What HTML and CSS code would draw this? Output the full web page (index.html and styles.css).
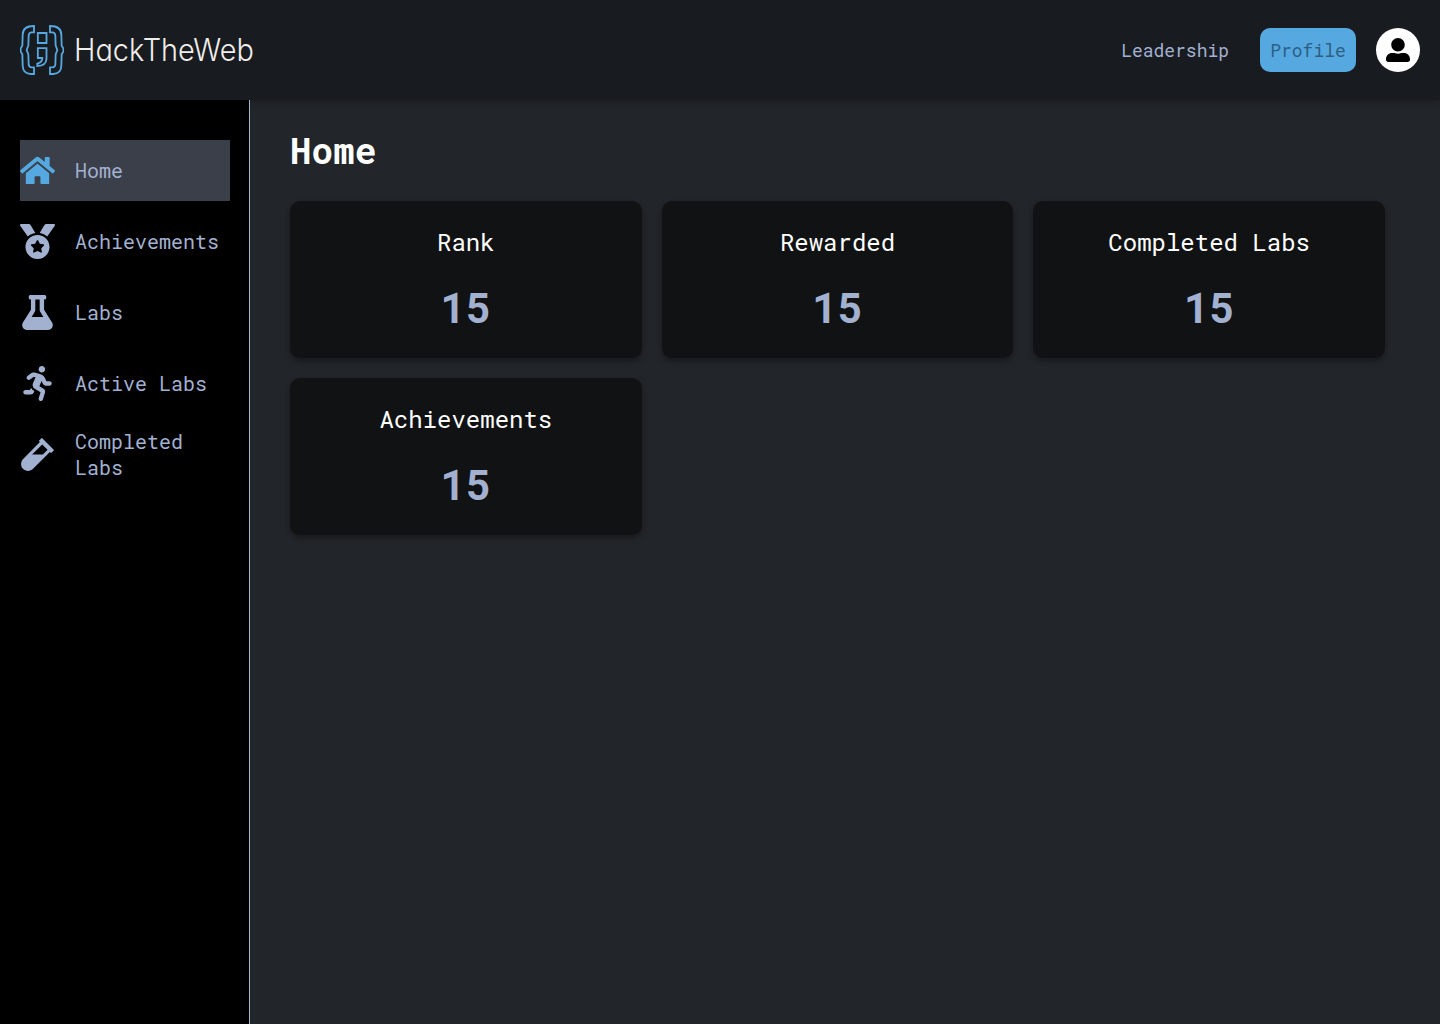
FILE: index.html
```html
<!DOCTYPE html>
<html lang="en">
<head>
<meta charset="utf-8">
<title>HackTheWeb</title>
<link rel="stylesheet" href="styles.css">
</head>
<body>
<header class="topbar">
  <a class="brand">
    <svg class="brand-mark" viewBox="0 0 132 150" fill="none" stroke="#55a9e0" stroke-width="5.5">
      <path d="M42 3V22H35Q27 22 26 31L25 62L20 75L25 88L26 119Q27 127 35 127H42V147H32Q8 146 8 121L7 88L2 80V70L7 62L8 29Q8 3 42 3Z"/>
      <path d="M90 3V22H97Q105 22 106 31L107 62L112 75L107 88L106 119Q105 127 97 127H90V147H100Q124 146 124 121L125 88L130 80V70L125 62L124 29Q124 3 90 3Z"/>
      <path d="M53.5 24H79.5V54H53.5ZM53.5 69.5H79.5V102Q78 123 52 123V116Q67 112 67 99H53.5Z"/>
    </svg>
    <svg class="brand-name" viewBox="0 0 182 50"><text x="-1" y="36" textLength="180" lengthAdjust="spacingAndGlyphs">HackTheWeb</text></svg>
  </a>
  <nav class="topnav">
    <a class="toplink">Leadership</a>
    <a class="profile">Profile</a>
    <span class="avatar"><svg viewBox="0 0 512 512"><path d="M256 288c79.5 0 144-64.5 144-144S335.5 0 256 0 112 64.5 112 144s64.5 144 144 144zm128 32h-55.1c-22.2 10.2-46.9 16-72.9 16s-50.6-5.8-72.9-16H128C57.3 320 0 377.3 0 448v16c0 26.5 21.5 48 48 48h416c26.5 0 48-21.5 48-48v-16c0-70.7-57.3-128-128-128z"/></svg></span>
  </nav>
</header>
<div class="layout">
  <aside class="sidebar">
    <a class="item active"><svg viewBox="0 0 576 512"><path d="M280.37 148.26L96 300.11V464a16 16 0 0 0 16 16l112.06-.29a16 16 0 0 0 15.92-16V368a16 16 0 0 1 16-16h64a16 16 0 0 1 16 16v95.64a16 16 0 0 0 16 16.05L464 480a16 16 0 0 0 16-16V300L295.67 148.26a12.19 12.19 0 0 0-15.3 0zM571.6 251.47L488 182.56V44.05a12 12 0 0 0-12-12h-56a12 12 0 0 0-12 12v72.61L318.47 43a48 48 0 0 0-61 0L4.34 251.47a12 12 0 0 0-1.6 16.9l25.5 31A12 12 0 0 0 45.15 301l235.22-193.74a12.19 12.19 0 0 1 15.3 0L530.9 301a12 12 0 0 0 16.9-1.6l25.5-31a12 12 0 0 0-1.7-16.93z"/></svg><span>Home</span></a>
    <a class="item"><svg viewBox="0 0 512 512"><path d="M223.75 130.75L154.62 15.54A31.997 31.997 0 0 0 127.18 0H16.03C3.08 0-4.5 14.57 2.92 25.18l111.27 158.96c29.72-27.77 67.52-46.83 109.56-53.39zM495.97 0H384.82c-11.24 0-21.66 5.9-27.44 15.54l-69.13 115.21c42.04 6.56 79.84 25.62 109.56 53.38L509.08 25.18C516.5 14.57 508.92 0 495.97 0zM256 160c-97.2 0-176 78.8-176 176s78.8 176 176 176 176-78.8 176-176-78.8-176-176-176zm92.52 157.26l-37.93 36.96 8.97 52.22c1.6 9.36-8.26 16.51-16.65 12.09L256 393.88l-46.9 24.65c-8.4 4.45-18.25-2.74-16.65-12.09l8.97-52.22-37.93-36.96c-6.82-6.64-3.05-18.23 6.35-19.59l52.43-7.64 23.43-47.52c2.11-4.28 6.19-6.39 10.28-6.39 4.11 0 8.22 2.14 10.33 6.39l23.43 47.52 52.43 7.64c9.4 1.36 13.17 12.95 6.35 19.59z"/></svg><span>Achievements</span></a>
    <a class="item"><svg viewBox="0 0 448 512"><path d="M437.2 403.5L320 215V64h8c13.3 0 24-10.7 24-24V24c0-13.3-10.7-24-24-24H120c-13.3 0-24 10.7-24 24v16c0 13.3 10.7 24 24 24h8v151L10.8 403.5C-18.5 450.6 15.3 512 70.9 512h306.2c55.7 0 89.4-61.5 60.1-108.5zM137.9 320l48.2-77.6c3.7-5.2 5.8-11.6 5.8-18.4V64h64v160c0 6.9 2.2 13.2 5.8 18.4l48.2 77.6h-172z"/></svg><span>Labs</span></a>
    <a class="item"><svg viewBox="0 0 416 512"><path d="M272 96c26.51 0 48-21.49 48-48S298.51 0 272 0s-48 21.49-48 48 21.49 48 48 48zM113.69 317.47l-14.8 34.52H32c-17.67 0-32 14.33-32 32s14.33 32 32 32h77.45c19.25 0 36.58-11.44 44.11-29.09l8.79-20.52-10.67-6.3c-17.32-10.23-30.06-25.37-37.99-42.61zM384 223.99h-44.03l-26.06-53.25c-12.5-25.55-35.45-44.23-61.78-50.94l-71.08-21.14c-28.3-6.8-57.77-.55-80.84 17.14l-39.67 30.41c-14.03 10.75-16.69 30.83-5.94 44.86s30.84 16.69 44.86 5.94l39.66-30.41c7.67-5.89 17.44-8 25.27-6.14l14.7 4.37-37.46 87.39c-12.62 29.48-1.31 64.01 26.3 80.31l84.98 50.17-27.47 87.73c-5.28 16.86 4.11 34.82 20.97 40.09 3.19 1 6.41 1.48 9.58 1.48 13.61 0 26.23-8.77 30.52-22.45l31.64-101.06c5.91-20.77-2.89-43.08-21.64-54.39l-61.24-36.14 31.31-78.28 20.27 41.43c8 16.34 24.92 26.89 43.11 26.89H384c17.67 0 32-14.33 32-32s-14.33-31.99-32-31.99z"/></svg><span>Active Labs</span></a>
    <a class="item"><svg viewBox="0 0 480 512"><path d="M477.7 186.1L309.5 18.3c-3.1-3.1-8.2-3.1-11.3 0l-34 33.9c-3.1 3.1-3.1 8.2 0 11.3l11.2 11.1L33 316.5c-38.8 38.7-45.1 102-9.4 143.5 20.6 24 49.5 36 78.4 35.9 26.4 0 52.8-10 72.9-30.1l246.3-245.7 11.2 11.1c3.1 3.1 8.2 3.1 11.3 0l34-33.9c3.1-3 3.1-8.1 0-11.2zM318 256H161l148-147.7 78.5 78.3L318 256z"/></svg><span>Completed Labs</span></a>
  </aside>
  <main class="content">
    <h1 class="title">Home</h1>
    <section class="cards">
      <article class="card"><h2 class="label">Rank</h2><p class="value">15</p></article>
      <article class="card"><h2 class="label">Rewarded</h2><p class="value">15</p></article>
      <article class="card"><h2 class="label">Completed Labs</h2><p class="value">15</p></article>
      <article class="card"><h2 class="label">Achievements</h2><p class="value">15</p></article>
    </section>
  </main>
</div>
</body>
</html>
```
FILE: styles.css
```css
* { box-sizing: border-box; margin: 0; padding: 0; }
body {
  display: flex;
  flex-direction: column;
  height: 1024px;
  background: #222529;
  color: #a3b1d1;
  font-family: "Roboto Mono", "DejaVu Sans Mono", monospace;
}
.topbar {
  display: flex;
  justify-content: space-between;
  align-items: center;
  height: 100px;
  padding: 0 20px;
  background: #181b1f;
  box-shadow: 0 2px 6px rgba(24, 27, 31, 0.9);
}
.brand { display: flex; align-items: center; gap: 11px; }
.brand-mark { width: 44px; height: 50px; }
.brand-name {
  width: 182px;
  height: 50px;
  overflow: visible;
  fill: #f0eeeb;
  font-family: Inter, sans-serif;
  font-size: 31px;
  font-weight: 300;
  font-feature-settings: "cv11";
}
.topnav { display: flex; align-items: center; font-size: 18px; }
.toplink { margin-right: 31px; letter-spacing: -0.02px; }
.profile {
  display: flex;
  align-items: center;
  justify-content: center;
  width: 96px;
  height: 44px;
  margin-right: 20px;
  border-radius: 10px;
  background: #55a9e0;
  color: #2c5f85;
}
.avatar {
  display: flex;
  align-items: center;
  justify-content: center;
  width: 44px;
  height: 44px;
  border-radius: 50%;
  background: #fff;
}
.avatar svg { width: 24px; height: 24px; }
.layout { display: flex; flex: 1; }
.sidebar {
  position: relative;
  display: flex;
  flex-direction: column;
  gap: 10px;
  width: 250px;
  padding: 40px 19px 0 20px;
  border-right: 1px solid #a3b1d1;
  background: #000;
}
.item {
  display: flex;
  align-items: center;
  gap: 20px;
  height: 61px;
  font-size: 20px;
  line-height: 26px;
}
.item span { padding-bottom: 2px; }
.item svg { flex: none; width: 35px; height: 35px; fill: #a3b1d1; }
.item.active { background: #3b3f49; }
.item.active svg { fill: #55a9e0; }
.content { flex: 1; padding: 27px 55px 0 40px; }
.title { color: #fff; font-size: 36px; line-height: 47px; font-weight: 700; }
.cards {
  display: grid;
  grid-template-columns: repeat(3, 1fr);
  gap: 20px;
  margin-top: 27px;
}
.card {
  height: 157px;
  padding-top: 25px;
  border-radius: 10px;
  background: #111214;
  box-shadow: 0 3px 5px rgba(17, 18, 20, 0.6);
  text-align: center;
}
.label { color: #fff; font-size: 24px; line-height: 32px; font-weight: 400; }
.value {
  margin-top: 21px;
  font-size: 42px;
  line-height: 56px;
  font-weight: 700;
}
```
